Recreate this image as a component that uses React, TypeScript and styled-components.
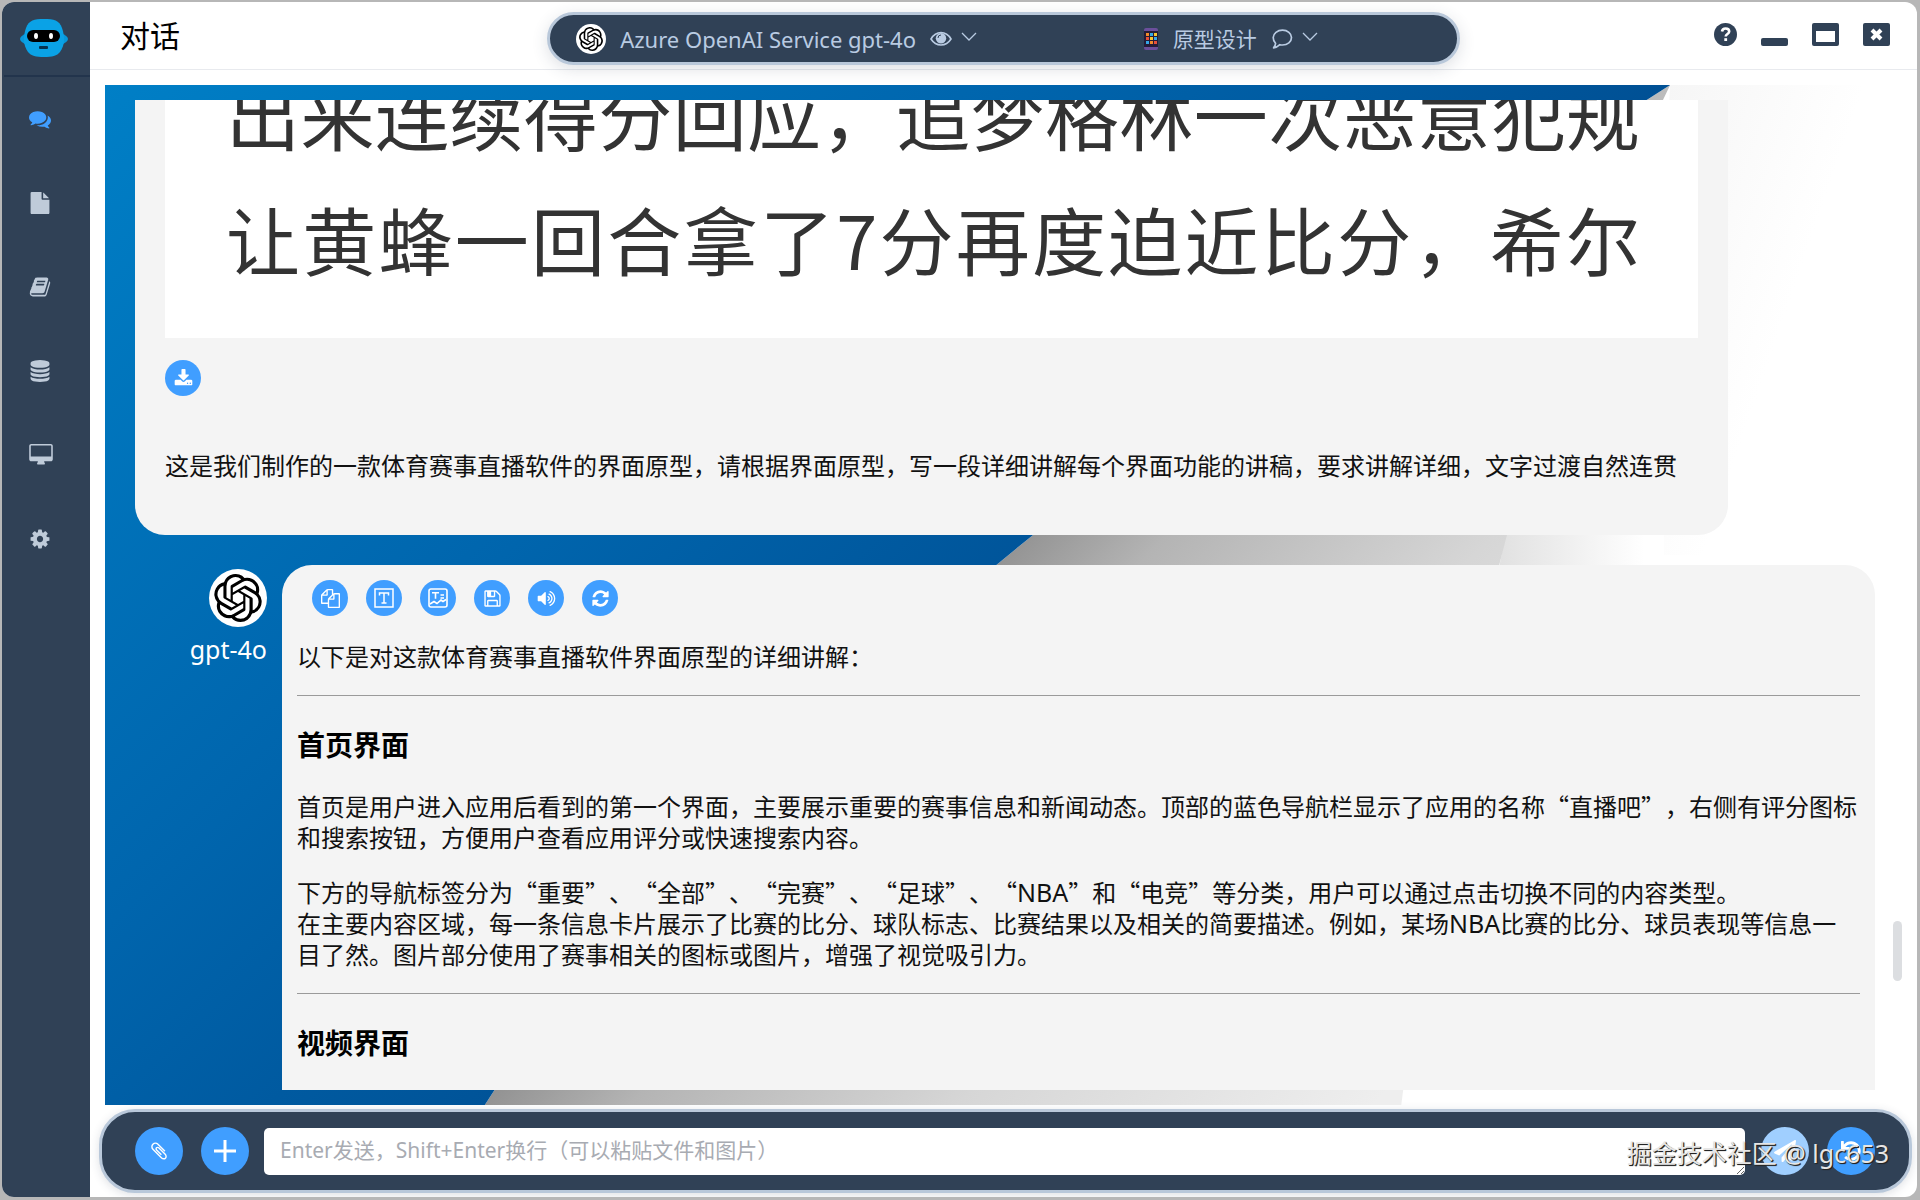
import React from "react";
import styled, { createGlobalStyle, css } from "styled-components";
import { FaPaperPlane, FaUndo } from "react-icons/fa";
import { SiOpenai } from "react-icons/si";

const navy = "#304156";
const blue = "#409eff";
const pale = "#bfcbd9";
const uiFont = `"Noto Sans", "Noto Sans CJK SC", sans-serif`;
const cjkFont = `"Noto Sans CJK SC", sans-serif`;

const GlobalStyle = createGlobalStyle`
  *, *::before, *::after { box-sizing: border-box; }
  body { margin: 0; background: #b7b7b7; font-family: ${uiFont}; color: #111; }
  button { border: 0; padding: 0; background: none; color: inherit; font: inherit; cursor: pointer; }
`;

const icons = {
  comments:
    "M1408 768q0 139-94 257t-256.5 186.5-353.5 68.5q-86 0-176-16-124 88-278 128-36 9-86 16h-3q-11 0-20.5-8t-11.5-21q-1-3-1-6.5t.5-6.5 2-6l2.5-5 3.5-5.5 4-5 4.5-5 4-4.5q5-6 23-25t26-29.5 22.5-29 25-38.5 20.5-44q-124-72-195-177t-71-224q0-139 94-257t256.5-186.5 353.5-68.5 353.5 68.5 256.5 186.5 94 257zm384 256q0 120-71 224.5t-195 176.5q10 24 20.5 44t25 38.5 22.5 29 26 29.5 23 25q1 1 4 4.5t4.5 5 4 5 3.5 5.5l2.5 5 2 6 .5 6.5-1 6.5q-3 14-13 22t-22 7q-50-7-86-16-154-40-278-128-90 16-176 16-271 0-472-132 58 4 88 4 161 0 309-45t264-129q125-92 192-212t67-254q0-77-23-152 129 71 204 178t75 230z",
  file: "M1152 512v-472q22 14 36 28l408 408q14 14 28 36h-472zm-128 32q0 40 28 68t68 28h544v1056q0 40-28 68t-68 28h-1344q-40 0-68-28t-28-68v-1600q0-40 28-68t68-28h800v544z",
  book: "M1703 478q40 57 18 129l-275 906q-19 64-76.5 107.5t-122.5 43.5h-923q-77 0-148.5-53.5t-99.5-131.5q-24-67-2-127 0-4 3-27t4-37q1-8-3-21.5t-3-19.5q2-11 8-21t16.5-23.5 16.5-23.5q23-38 45-91.5t30-91.5q3-10 .5-30t-.5-28q3-11 17-28t17-23q21-36 42-92t25-90q1-9-2.5-32t.5-28q4-13 22-30.5t22-22.5q19-26 42.5-84.5t27.5-96.5q1-8-3-25.5t-2-26.5q2-8 9-18t18-23 17-21q8-12 16.5-30.5t15-35 16-36 19.5-32 26.5-23.5 36-11.5 47.5 5.5l-1 3q38-9 51-9h761q74 0 114 56t18 130l-274 906q-36 119-71.5 153.5t-128.5 34.5h-869q-27 0-38 15-11 16-1 43 24 70 144 70h923q29 0 56-15.5t35-41.5l300-987q7-22 5-57 38 15 59 43zm-1064 2q-4 13 2 22.5t20 9.5h608q13 0 25.5-9.5t16.5-22.5l21-64q4-13-2-22.5t-20-9.5h-608q-13 0-25.5 9.5t-16.5 22.5zm-83 256q-4 13 2 22.5t20 9.5h608q13 0 25.5-9.5t16.5-22.5l21-64q4-13-2-22.5t-20-9.5h-608q-13 0-25.5 9.5t-16.5 22.5z",
  database:
    "M896 768q237 0 443-43t325-127v170q0 69-103 128t-280 93.5-385 34.5-385-34.5-280-93.5-103-128v-170q119 84 325 127t443 43zm0 768q237 0 443-43t325-127v170q0 69-103 128t-280 93.5-385 34.5-385-34.5-280-93.5-103-128v-170q119 84 325 127t443 43zm0-384q237 0 443-43t325-127v170q0 69-103 128t-280 93.5-385 34.5-385-34.5-280-93.5-103-128v-170q119 84 325 127t443 43zm0-1152q208 0 385 34.5t280 93.5 103 128v128q0 69-103 128t-280 93.5-385 34.5-385-34.5-280-93.5-103-128v-128q0-69 103-128t280-93.5 385-34.5z",
  desktop:
    "M1728 992v-832q0-13-9.5-22.5t-22.5-9.5h-1600q-13 0-22.5 9.5t-9.5 22.5v832q0 13 9.5 22.5t22.5 9.5h1600q13 0 22.5-9.5t9.5-22.5zm128-832v1088q0 66-47 113t-113 47h-544q0 37 16 77.5t32 71 16 43.5q0 26-19 45t-45 19h-512q-26 0-45-19t-19-45q0-14 16-44t32-70 16-78h-544q-66 0-113-47t-47-113v-1088q0-66 47-113t113-47h1600q66 0 113 47t47 113z",
  cog: "M1152 896q0-106-75-181t-181-75-181 75-75 181 75 181 181 75 181-75 75-181zm512-109v222q0 12-8 23t-20 13l-185 28q-19 54-39 91 35 50 107 138 10 12 10 25t-9 23q-27 37-99 108t-94 71q-12 0-26-9l-138-108q-44 23-91 38-16 136-29 186-7 28-36 28h-222q-14 0-24.5-8.5t-11.5-21.5l-28-184q-49-16-90-37l-141 107q-10 9-25 9-14 0-25-11-126-114-165-168-7-10-7-23 0-12 8-23 15-21 51-66.5t54-70.5q-27-50-41-99l-183-27q-13-2-21-12.5t-8-23.5v-222q0-12 8-23t19-13l186-28q14-46 39-92-40-57-107-138-10-12-10-24 0-10 9-23 26-36 98.5-107.5t94.5-71.5q13 0 26 10l138 107q44-23 91-38 16-136 29-186 7-28 36-28h222q14 0 24.5 8.5t11.5 21.5l28 184q49 16 90 37l142-107q9-9 24-9 13 0 25 10 129 119 165 170 7 8 7 22 0 12-8 23-15 21-51 66.5t-54 70.5q26 50 41 98l183 28q13 2 21 12.5t8 23.5z",
  download:
    "M1344 1344q0-26-19-45t-45-19-45 19-19 45 19 45 45 19 45-19 19-45zm256 0q0-26-19-45t-45-19-45 19-19 45 19 45 45 19 45-19 19-45zm128-224v320q0 40-28 68t-68 28h-1472q-40 0-68-28t-28-68v-320q0-40 28-68t68-28h465l135 136q58 56 136 56t136-56l136-136h464q40 0 68 28t28 68zm-325-569q17 41-14 70l-448 448q-18 19-45 19t-45-19l-448-448q-31-29-14-70 17-39 59-39h256v-448q0-26 19-45t45-19h256q26 0 45 19t19 45v448h256q42 0 59 39z",
  volume:
    "M832 352v1088q0 26-19 45t-45 19-45-19l-333-333h-262q-26 0-45-19t-19-45v-384q0-26 19-45t45-19h262l333-333q19-19 45-19t45 19 19 45zm384 544q0 76-42.5 141.5t-112.5 93.5q-10 5-25 5-26 0-45-18.5t-19-45.5q0-21 12-35.5t29-25 34-23 29-36 12-56.5-12-56.5-29-36-34-23-29-25-12-35.5q0-27 19-45.5t45-18.5q15 0 25 5 70 27 112.5 93t42.5 142zm256 0q0 153-85 282.5t-225 188.5q-13 5-25 5-27 0-46-19t-19-45q0-39 39-59 56-29 76-44 74-54 115.5-135.5t41.5-173.5-41.5-173.5-115.5-135.5q-20-15-76-44-39-20-39-59 0-26 19-45t45-19q13 0 26 5 140 59 225 188.5t85 282.5zm256 0q0 230-127 422.5t-338 283.5q-13 5-26 5-26 0-45-19t-19-45q0-36 39-59 7-4 22.5-10.5t22.5-10.5q46-25 82-51 123-91 192-227t69-289-69-289-192-227q-36-26-82-51-7-4-22.5-10.5t-22.5-10.5q-39-23-39-59 0-26 19-45t45-19q13 0 26 5 211 91 338 283.5t127 422.5z",
  refresh:
    "M1639 1056q0 5-1 7-64 268-268 434.5t-478 166.5q-146 0-282.5-55t-243.5-157l-129 129q-19 19-45 19t-45-19-19-45v-448q0-26 19-45t45-19h448q26 0 45 19t19 45-19 45l-137 137q71 66 161 102t187 36q134 0 250-65t186-179q11-17 53-117 8-23 30-23h192q13 0 22.5 9.5t9.5 22.5zm25-800v448q0 26-19 45t-45 19h-448q-26 0-45-19t-19-45 19-45l138-138q-148-137-349-137-134 0-250 65t-186 179q-11 17-53 117-8 23-30 23h-199q-13 0-22.5-9.5t-9.5-22.5v-7q65-268 270-434.5t480-166.5q146 0 284 55.5t245 156.5l130-129q19-19 45-19t45 19 19 45z",
  copy: "M1696 384q40 0 68 28t28 68v1216q0 40-28 68t-68 28h-960q-40 0-68-28t-28-68v-288h-544q-40 0-68-28t-28-68v-672q0-40 20-88t48-76l408-408q28-28 76-48t88-20h416q40 0 68 28t28 68v328q68-40 128-40h416zm-544 213l-299 299h299v-299zm-640-384l-299 299h299v-299zm196 647l316-316v-416h-384v416q0 40-28 68t-68 28h-416v640h512v-256q0-40 20-88t48-76zm956 804v-1152h-384v416q0 40-28 68t-68 28h-416v640h896z",
  save: "M512 1536h768v-384h-768v384zm896 0h128v-896q0-14-10-38.5t-20-34.5l-281-281q-10-10-34-20t-39-10v416q0 40-28 68t-68 28h-576q-40 0-68-28t-28-68v-416h-128v1280h128v-416q0-40 28-68t68-28h832q40 0 68 28t28 68v416zm-384-928v-320q0-13-9.5-22.5t-22.5-9.5h-192q-13 0-22.5 9.5t-9.5 22.5v320q0 13 9.5 22.5t22.5 9.5h192q13 0 22.5-9.5t9.5-22.5zm640 32v928q0 40-28 68t-68 28h-1344q-40 0-68-28t-28-68v-1344q0-40 28-68t68-28h928q40 0 88 20t76 48l280 280q28 28 48 76t20 88z",
  clip: "M1596 1385q0 117-79 196t-196 79q-135 0-235-100l-777-776q-113-115-113-271 0-159 110-270t269-111q158 0 273 113l605 606q10 10 10 22 0 16-30.5 46.5t-46.5 30.5q-13 0-23-10l-606-607q-79-77-181-77-106 0-179 75t-73 181q0 105 76 181l776 777q63 63 145 63 64 0 106-42t42-106q0-82-63-145l-581-581q-26-24-60-24-29 0-48 19t-19 48q0 32 25 59l410 410q10 10 10 22 0 16-31 47t-47 31q-12 0-22-10l-410-410q-63-61-63-149 0-82 57-139t139-57q88 0 149 63l581 581q100 98 100 235z",
};

type IconName = keyof typeof icons;

function Icon({ name, size }: { name: IconName; size: number }) {
  const wide = name === "desktop";
  return (
    <svg
      width={wide ? size + 2 : size}
      height={size}
      viewBox={wide ? "-64 0 1920 1792" : "0 0 1792 1792"}
      fill="currentColor"
      aria-hidden="true"
    >
      <path d={icons[name]} />
    </svg>
  );
}

/* ---------- window frame ---------- */

const Window = styled.div`
  height: calc(100vh - 5px);
  margin: 2px 3px 3px 2px;
  display: flex;
  border-radius: 12px;
  overflow: hidden;
  background: #fff;
  position: relative;
`;

const Sidebar = styled.nav`
  width: 88px;
  flex: none;
  background: ${navy};
  display: flex;
  flex-direction: column;
`;

const Brand = styled.div`
  height: 75px;
  margin-left: 2px;
  padding: 17px 15px;
  border-bottom: 2px solid #22344c;
`;

const NavButton = styled.button<{ $active?: boolean }>`
  height: 84px;
  padding-left: 27px;
  display: flex;
  align-items: center;
  color: ${(p) => (p.$active ? blue : pale)};
`;

const Main = styled.div`
  flex: 1;
  min-width: 0;
  display: flex;
  flex-direction: column;
`;

/* ---------- header ---------- */

const Header = styled.header`
  height: 68px;
  flex: none;
  display: grid;
  grid-template-columns: 1fr 2fr 1fr;
  align-items: center;
  padding-bottom: 6px;
  border-bottom: 1px solid #e8eaee;
`;

const Title = styled.h1`
  margin: 0;
  padding: 0 0 0 30px;
  font: 400 30px/40px ${cjkFont};
  color: #000;
`;

const Pill = styled.div`
  height: 53px;
  margin-top: 10px;
  display: grid;
  grid-template-columns: 1fr 1fr;
  border: 3px solid #b9c8da;
  border-radius: 27px;
  background: ${navy};
  box-shadow: 0 4px 16px rgba(48, 65, 86, 0.16);
`;

const Picker = styled.button<{ $size: number }>`
  display: flex;
  align-items: center;
  justify-content: center;
  color: #b9cbe2;
  font: 400 ${(p) => p.$size}px/30px ${uiFont};
`;

const PickerText = styled.span`
  margin: 0 14px;
`;

const PickerArrow = styled.svg`
  margin-left: 9px;
  margin-bottom: 4px;
`;

const LogoDisc = styled.span<{ $size: number }>`
  width: ${(p) => p.$size}px;
  height: ${(p) => p.$size}px;
  display: grid;
  place-items: center;
  border-radius: 50%;
  background: #fff;
  color: #000;
  flex: none;
`;

const Controls = styled.div`
  display: flex;
  justify-content: flex-end;
  gap: 24px;
  padding: 2px 27px 0 0;
  color: ${navy};

  button {
    display: flex;
  }
`;

/* ---------- chat ---------- */

const Chat = styled.main`
  flex: 1;
  min-height: 0;
  margin: 15px 0 4px 15px;
  padding: 15px 42px 15px 30px;
  position: relative;
  display: flex;
  isolation: isolate;
`;

const Backdrop = styled.svg`
  position: absolute;
  inset: 0;
  width: 100%;
  height: 100%;
  z-index: -1;
`;

const Thread = styled.div`
  flex: 1;
  min-width: 0;
  display: flex;
  flex-direction: column;
  gap: 30px;
  overflow: hidden;
`;

const bubble = css`
  background: #f4f4f4;
  font: 400 24px/31px ${cjkFont};
  text-spacing-trim: space-all;
  color: #111;
`;

const UserBubble = styled.section`
  ${bubble}
  flex: none;
  margin-right: 147px;
  padding: 0 30px 29px;
  border-radius: 0 0 30px 30px;

  p {
    margin: 53px 0 26px;
  }
`;

const Attachment = styled.figure`
  height: 238px;
  margin: 0 0 22px;
  padding: 0 58px 38px 61px;
  display: flex;
  flex-direction: column;
  justify-content: flex-end;
  overflow: hidden;
  background: #fff;
  color: #333;
  font: 400 74px/125px ${cjkFont};
`;

const AttachmentLine = styled.div`
  white-space: nowrap;
  text-align: justify;
  text-align-last: justify;
`;

const RoundButton = styled.button<{ $size: number; $faded?: boolean }>`
  width: ${(p) => p.$size}px;
  height: ${(p) => p.$size}px;
  flex: none;
  display: grid;
  place-items: center;
  border-radius: 50%;
  background: ${(p) => (p.$faded ? "#a0cfff" : blue)};
  color: #fff;
`;

const Reply = styled.div`
  flex: 1;
  min-height: 0;
  display: flex;
`;

const Sender = styled.div`
  width: 147px;
  flex: none;
  padding: 4px 15px 0 0;
  display: flex;
  flex-direction: column;
  align-items: flex-end;
  gap: 5px;
  color: #fff;
  font: 400 25px/34px ${uiFont};
`;

const ReplyBubble = styled.article`
  ${bubble}
  flex: 1;
  min-width: 0;
  padding: 15px 15px 0;
  border-radius: 30px 30px 0 0;
  overflow: hidden;

  p {
    margin: 24px 0;
  }

  h3 {
    margin: 28px 0 26px;
    font-size: 28px;
    line-height: 40px;
    color: #000;
  }

  hr {
    margin: 0;
    border: 0;
    border-top: 1px solid #9a9a9a;
  }
`;

const Latin = styled.span`
  font-family: "Noto Sans", sans-serif;
  font-size: 25px;
  line-height: 1;
`;

const Actions = styled.div`
  display: flex;
  gap: 18px;
  padding-left: 15px;
`;

const ScrollThumb = styled.div`
  position: absolute;
  right: 15px;
  top: 82%;
  width: 9px;
  height: 60px;
  border-radius: 5px;
  background: #dcdee1;
`;

/* ---------- composer ---------- */

const Composer = styled.form`
  flex: none;
  margin: 0 5px 4px 9px;
  height: 84px;
  padding: 0 34px 0 33px;
  display: flex;
  align-items: center;
  gap: 18px;
  border: 3px solid #b9c8da;
  border-radius: 36px;
  background: ${navy};
  box-shadow: 0 2px 10px rgba(48, 65, 86, 0.16);
`;

const Message = styled.textarea`
  flex: 1;
  min-width: 0;
  height: 47px;
  margin: 0 -2px 0 -3px;
  padding: 7px 16px;
  border: 0;
  border-radius: 5px;
  background: #fff;
  font: 400 21px/30px ${uiFont};
  text-spacing-trim: space-all;
  resize: vertical;
  overflow: hidden;

  &::placeholder {
    color: #a8abb2;
    opacity: 1;
  }
`;

const Watermark = styled.div`
  position: absolute;
  right: 28px;
  bottom: 26px;
  color: #e6e6e6;
  font: 400 25px/36px ${uiFont};
  text-shadow: 1px 1px 1px #222, 1px 1px 0 #333;
  pointer-events: none;
  z-index: 2;
`;

/* ---------- drawings ---------- */

function Robot() {
  return (
    <svg width="50" height="40" viewBox="0 0 50 40" aria-hidden="true">
      <ellipse cx="25" cy="20" rx="24" ry="8" fill="#0798dc" />
      <path d="M25 0C35 0 40 1 43 9c3 9 3 17-2 24-3 4-8 5-16 5s-13-1-16-5C4 26 4 18 7 9 10 1 15 0 25 0Z" fill="#0aa2e6" />
      <rect x="8" y="11" width="33" height="12" rx="6" fill="#000" />
      <ellipse cx="17" cy="17" rx="2" ry="3" fill="#fff" />
      <ellipse cx="32" cy="17" rx="2" ry="3" fill="#fff" />
      <rect x="20" y="27" width="9" height="3" rx="1" fill="#06324f" />
    </svg>
  );
}

function Chevron() {
  return (
    <PickerArrow width="16" height="10" viewBox="0 0 16 10" fill="none" stroke="currentColor" strokeWidth="1.3" aria-hidden="true">
      <path d="M1 1l7 7 7-7" />
    </PickerArrow>
  );
}

function Eye() {
  return (
    <svg width="22" height="16" viewBox="0 0 22 16" aria-hidden="true">
      <path d="M1 8C6-.5 16-.5 21 8 16 16 6 16 1 8Z" fill="none" stroke="currentColor" strokeWidth="1.6" />
      <circle cx="11" cy="7.2" r="5.2" fill="currentColor" />
      <path d="M8 7a3 3 0 0 1 3-3" fill="none" stroke={navy} strokeWidth="1" />
    </svg>
  );
}

function Speech() {
  return (
    <svg width="22" height="20" viewBox="0 0 22 20" fill="none" stroke="currentColor" strokeWidth="1.7" strokeLinejoin="round" aria-hidden="true">
      <path d="M11.500 1.200c5 0 9 3.200 9 7.400s-4 7.400-9 7.400c-1 0-1.800-.1-2.600-.3C7 17.500 5 18.500 2.600 18.800c1.200-1.300 1.900-2.700 2-4.500C3 13 2.200 11 2.200 8.600c0-4.200 4.300-7.400 9.300-7.400Z" />
    </svg>
  );
}

function Phone() {
  const colours = ["#f28c28", "#35a7e8", "#f4c430", "#e8503a", "#f4c430", "#35a7e8", "#35a7e8", "#f28c28", "#e8503a"];
  return (
    <svg width="16" height="22" viewBox="0 0 16 22" aria-hidden="true">
      <rect x="1" width="14" height="22" rx="2" fill="#6b4f9b" />
      <rect x="1" y="3" width="14" height="16" fill="#241d38" />
      {colours.map((c, i) => (
        <rect key={i} x={3 + (i % 3) * 4} y={5 + Math.floor(i / 3) * 4} width="3" height="3" fill={c} />
      ))}
    </svg>
  );
}

function TextFrame() {
  return (
    <svg width="20" height="20" viewBox="0 0 20 20" fill="none" stroke="currentColor" strokeWidth="1.5" aria-hidden="true">
      <rect x="1" y="1" width="18" height="18" />
      <path d="M5.500 7.500V5h9v2.500M10 5v10M7.500 15h5" />
    </svg>
  );
}

function PictureFrame() {
  return (
    <svg width="20" height="20" viewBox="0 0 20 20" fill="none" stroke="currentColor" strokeWidth="1.6" aria-hidden="true">
      <rect x="1" y="1" width="18" height="18" rx="2" />
      <path d="M4 4.800h7M7.500 4.800v6M12.500 7h3.500M12.500 10h3.500M2 16l4-2.500 3 2L13 12l2 1.500 3-2" />
    </svg>
  );
}

function ChatBackdrop() {
  return (
    <Backdrop viewBox="0 0 1813 1020" preserveAspectRatio="none" aria-hidden="true">
      <defs>
        <linearGradient id="sea" gradientUnits="userSpaceOnUse" x1="0" y1="0" x2="840" y2="900">
          <stop offset="0" stopColor="#007fc6" />
          <stop offset="0.5" stopColor="#0065ad" />
          <stop offset="1" stopColor="#00498c" />
        </linearGradient>
        <linearGradient id="shade" gradientUnits="userSpaceOnUse" x1="635" y1="730" x2="1115" y2="1183">
          <stop offset="0" stopColor="#8f8f8f" />
          <stop offset="0.18" stopColor="#b4b4b4" />
          <stop offset="0.54" stopColor="#d6d6d6" />
          <stop offset="1" stopColor="#eeeeee" />
        </linearGradient>
        <linearGradient id="glow" gradientUnits="userSpaceOnUse" x1="1380" y1="0" x2="1540" y2="0">
          <stop offset="0" stopColor="#dedede" />
          <stop offset="1" stopColor="#ffffff" />
        </linearGradient>
        <linearGradient id="mist" gradientUnits="userSpaceOnUse" x1="1566" y1="0" x2="1740" y2="60">
          <stop offset="0" stopColor="#f6f6f6" />
          <stop offset="1" stopColor="#ffffff" />
        </linearGradient>
      </defs>
      <path d="M1566 0H1813V470H1540Z" fill="url(#mist)" />
      <path d="M1500 200L1403 440 1380 560H1560V300Z" fill="url(#glow)" />
      <path d="M1566 0Q669 569 380 1020H1297Q1374 390 1566 0Z" fill="url(#shade)" />
      <path d="M0 0H1566Q669 569 380 1020H0Z" fill="url(#sea)" />
    </Backdrop>
  );
}

const navItems: { name: IconName; label: string }[] = [
  { name: "comments", label: "对话" },
  { name: "file", label: "文件" },
  { name: "book", label: "知识库" },
  { name: "database", label: "数据" },
  { name: "desktop", label: "桌面" },
  { name: "cog", label: "设置" },
];

export default function App() {
  return (
    <>
      <GlobalStyle />
      <Window lang="zh-CN">
        <Sidebar>
          <Brand>
            <Robot />
          </Brand>
          {navItems.map((item, i) => (
            <NavButton key={item.name} type="button" $active={i === 0} aria-label={item.label}>
              <Icon name={item.name} size={22} />
            </NavButton>
          ))}
        </Sidebar>

        <Main>
          <Header>
            <Title>对话</Title>
            <Pill>
              <Picker type="button" $size={22}>
                <LogoDisc $size={30}>
                  <SiOpenai size={24} />
                </LogoDisc>
                <PickerText>Azure OpenAI Service gpt-4o</PickerText>
                <Eye />
                <Chevron />
              </Picker>
              <Picker type="button" $size={21}>
                <Phone />
                <PickerText>原型设计</PickerText>
                <Speech />
                <Chevron />
              </Picker>
            </Pill>
            <Controls>
              <button type="button" aria-label="帮助">
                <svg width="23" height="23" viewBox="0 0 23 23" fill="none">
                  <circle cx="11.5" cy="11.5" r="11.5" fill="currentColor" />
                  <path d="M8 8.500c.3-2 1.700-3 3.600-3 2 0 3.600 1.200 3.600 3 0 2.500-3.500 2.500-3.500 5" stroke="#fff" strokeWidth="2.600" />
                  <rect x="10.300" y="15.200" width="2.800" height="2.800" fill="#fff" />
                </svg>
              </button>
              <button type="button" aria-label="最小化">
                <svg width="27" height="23" viewBox="0 0 27 23">
                  <rect y="15" width="27" height="8" rx="2" fill="currentColor" />
                </svg>
              </button>
              <button type="button" aria-label="最大化">
                <svg width="27" height="23" viewBox="0 0 27 23">
                  <rect width="27" height="23" rx="2" fill="currentColor" />
                  <rect x="4" y="8" width="19" height="11" fill="#fff" />
                </svg>
              </button>
              <button type="button" aria-label="关闭">
                <svg width="27" height="23" viewBox="0 0 27 23">
                  <rect width="27" height="23" rx="2" fill="currentColor" />
                  <path d="M9 7l9 9M18 7l-9 9" stroke="#fff" strokeWidth="4" />
                </svg>
              </button>
            </Controls>
          </Header>

          <Chat>
            <ChatBackdrop />
            <Thread>
              <UserBubble>
                <Attachment>
                  <AttachmentLine>出来连续得分回应，追梦格林一次恶意犯规</AttachmentLine>
                  <AttachmentLine>让黄蜂一回合拿了7分再度迫近比分，希尔</AttachmentLine>
                </Attachment>
                <RoundButton type="button" $size={36} aria-label="下载">
                  <Icon name="download" size={19} />
                </RoundButton>
                <p>这是我们制作的一款体育赛事直播软件的界面原型，请根据界面原型，写一段详细讲解每个界面功能的讲稿，要求讲解详细，文字过渡自然连贯</p>
              </UserBubble>

              <Reply>
                <Sender>
                  <LogoDisc $size={58}>
                    <SiOpenai size={48} />
                  </LogoDisc>
                  <span>gpt-4o</span>
                </Sender>
                <ReplyBubble>
                  <Actions>
                    <RoundButton type="button" $size={36} aria-label="复制">
                      <Icon name="copy" size={19} />
                    </RoundButton>
                    <RoundButton type="button" $size={36} aria-label="文本">
                      <TextFrame />
                    </RoundButton>
                    <RoundButton type="button" $size={36} aria-label="图文">
                      <PictureFrame />
                    </RoundButton>
                    <RoundButton type="button" $size={36} aria-label="保存">
                      <Icon name="save" size={19} />
                    </RoundButton>
                    <RoundButton type="button" $size={36} aria-label="朗读">
                      <Icon name="volume" size={19} />
                    </RoundButton>
                    <RoundButton type="button" $size={36} aria-label="重新生成">
                      <Icon name="refresh" size={19} />
                    </RoundButton>
                  </Actions>
                  <p>以下是对这款体育赛事直播软件界面原型的详细讲解：</p>
                  <hr />
                  <h3>首页界面</h3>
                  <p>
                    首页是用户进入应用后看到的第一个界面，主要展示重要的赛事信息和新闻动态。顶部的蓝色导航栏显示了应用的名称“直播吧”，右侧有评分图标和搜索按钮，方便用户查看应用评分或快速搜索内容。
                  </p>
                  <p>
                    下方的导航标签分为“重要”、“全部”、“完赛”、“足球”、“<Latin>NBA</Latin>”和“电竞”等分类，用户可以通过点击切换不同的内容类型。
                    <br />
                    在主要内容区域，每一条信息卡片展示了比赛的比分、球队标志、比赛结果以及相关的简要描述。例如，某场<Latin>NBA</Latin>比赛的比分、球员表现等信息一目了然。图片部分使用了赛事相关的图标或图片，增强了视觉吸引力。
                  </p>
                  <hr />
                  <h3>视频界面</h3>
                </ReplyBubble>
              </Reply>
            </Thread>
            <ScrollThumb />
          </Chat>

          <Composer onSubmit={(e) => e.preventDefault()}>
            <RoundButton type="button" $size={48} aria-label="添加附件">
              <Icon name="clip" size={20} />
            </RoundButton>
            <RoundButton type="button" $size={48} aria-label="新建">
              <svg width="24" height="24" viewBox="0 0 24 24" stroke="currentColor" strokeWidth="3" aria-hidden="true">
                <path d="M12 1v22M1 12h22" />
              </svg>
            </RoundButton>
            <Message aria-label="消息" rows={1} placeholder="Enter发送，Shift+Enter换行（可以粘贴文件和图片）" />
            <RoundButton type="submit" $size={48} $faded aria-label="发送">
              <FaPaperPlane size={22} />
            </RoundButton>
            <RoundButton type="button" $size={48} aria-label="撤销">
              <FaUndo size={20} />
            </RoundButton>
          </Composer>
        </Main>
        <Watermark>掘金技术社区 @ lgc653</Watermark>
      </Window>
    </>
  );
}
